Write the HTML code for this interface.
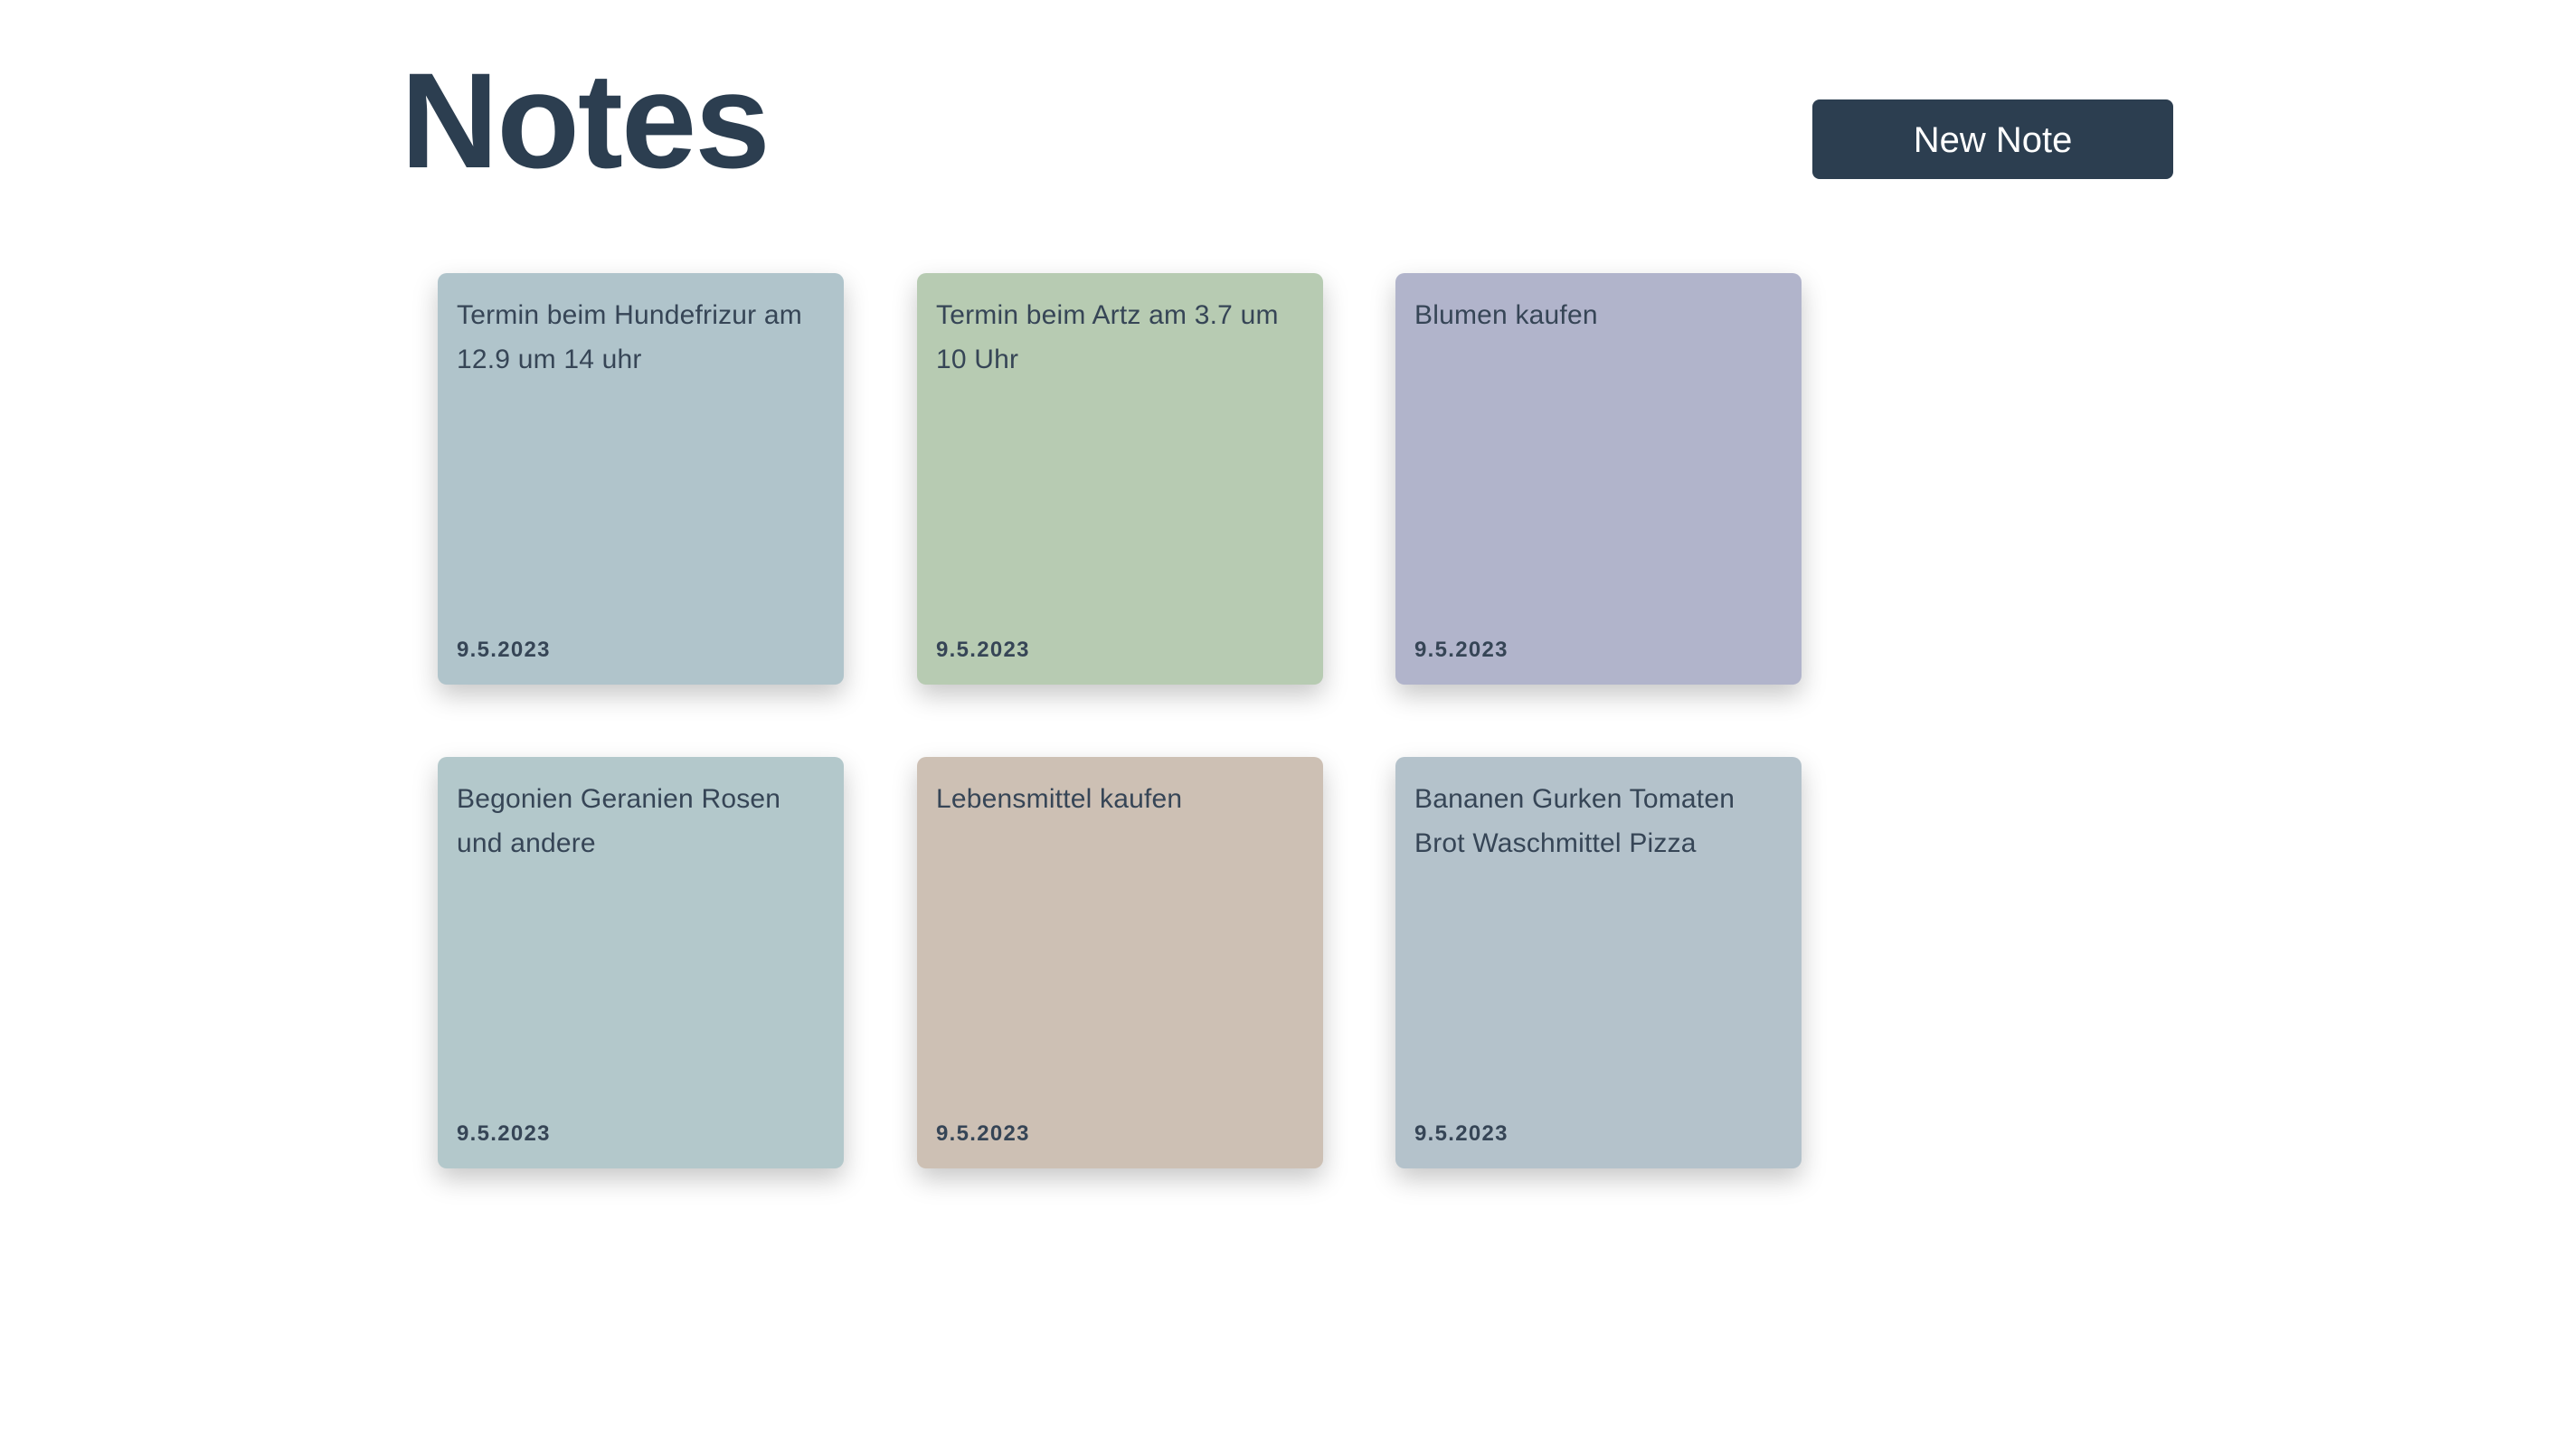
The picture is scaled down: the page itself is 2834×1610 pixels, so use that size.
<!DOCTYPE html>
<html><head><meta charset="utf-8"><style>
html,body{margin:0;padding:0;background:#fff;width:2834px;height:1610px;overflow:hidden;font-family:"Liberation Sans",sans-serif;}
h1{position:absolute;left:443px;top:48px;margin:0;font-size:150px;font-weight:bold;color:#2c3e50;letter-spacing:-2px;line-height:170px;}
.btn{position:absolute;left:2004px;top:110px;width:399px;height:88px;background:#2c3e50;border-radius:8px;color:#fff;font-size:40px;text-align:center;line-height:90px;}
.card{position:absolute;width:449px;height:455px;border-radius:10px;box-shadow:0 12px 28px rgba(0,0,0,0.22);color:#364556;}
.t{position:absolute;left:21px;top:22px;right:18px;font-size:30px;line-height:49px;letter-spacing:0.2px;}
.d{position:absolute;left:21px;top:403px;font-size:24px;font-weight:bold;letter-spacing:1.3px;}
</style></head><body>
<h1>Notes</h1>
<div class="btn">New Note</div>
<div class="card" style="left:484px;top:302px;background:#b0c4cb"><div class="t">Termin beim Hundefrizur am 12.9 um 14 uhr</div><div class="d">9.5.2023</div></div>
<div class="card" style="left:1014px;top:302px;background:#b7cbb2"><div class="t">Termin beim Artz am 3.7 um 10 Uhr</div><div class="d">9.5.2023</div></div>
<div class="card" style="left:1543px;top:302px;background:#b1b4cb"><div class="t">Blumen kaufen</div><div class="d">9.5.2023</div></div>
<div class="card" style="left:484px;top:837px;background:#b3c8cb"><div class="t">Begonien Geranien Rosen und andere</div><div class="d">9.5.2023</div></div>
<div class="card" style="left:1014px;top:837px;background:#cdc0b4"><div class="t">Lebensmittel kaufen</div><div class="d">9.5.2023</div></div>
<div class="card" style="left:1543px;top:837px;background:#b4c2cb"><div class="t">Bananen Gurken Tomaten Brot Waschmittel Pizza</div><div class="d">9.5.2023</div></div>
</body></html>
